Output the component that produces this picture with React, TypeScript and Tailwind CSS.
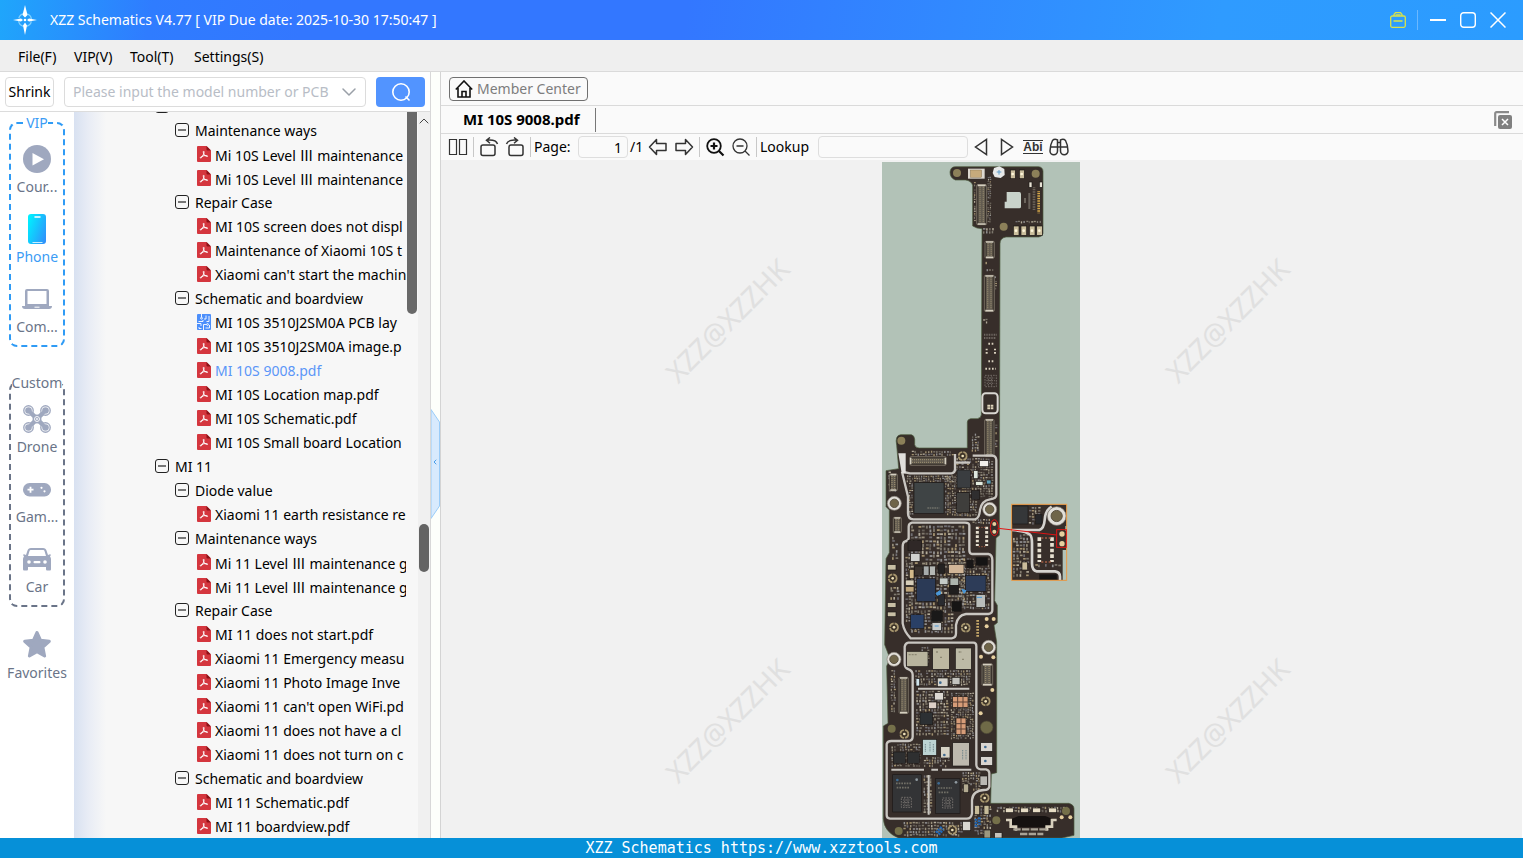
import type { ReactNode } from "react";
import { ChevronDown, ChevronLeft, ChevronUp } from "lucide-react";

type NodeKind = "group" | "folder" | "pdf" | "pcb";

const TREE: { kind: NodeKind; label: string; active?: boolean }[] = [
  { kind: "group", label: "" },
  { kind: "folder", label: "Maintenance ways" },
  { kind: "pdf", label: "Mi 10S Level Ⅲ maintenance" },
  { kind: "pdf", label: "Mi 10S Level Ⅲ maintenance" },
  { kind: "folder", label: "Repair Case" },
  { kind: "pdf", label: "MI 10S screen does not displ" },
  { kind: "pdf", label: "Maintenance of Xiaomi 10S t" },
  { kind: "pdf", label: "Xiaomi can't start the machin" },
  { kind: "folder", label: "Schematic and boardview" },
  { kind: "pcb", label: "MI 10S 3510J2SM0A PCB lay" },
  { kind: "pdf", label: "MI 10S 3510J2SM0A image.p" },
  { kind: "pdf", label: "MI 10S 9008.pdf", active: true },
  { kind: "pdf", label: "MI 10S Location map.pdf" },
  { kind: "pdf", label: "MI 10S Schematic.pdf" },
  { kind: "pdf", label: "MI 10S Small board Location" },
  { kind: "group", label: "MI 11" },
  { kind: "folder", label: "Diode value" },
  { kind: "pdf", label: "Xiaomi 11 earth resistance re" },
  { kind: "folder", label: "Maintenance ways" },
  { kind: "pdf", label: "Mi 11 Level Ⅲ maintenance g" },
  { kind: "pdf", label: "Mi 11 Level Ⅲ maintenance g" },
  { kind: "folder", label: "Repair Case" },
  { kind: "pdf", label: "MI 11 does not start.pdf" },
  { kind: "pdf", label: "Xiaomi 11 Emergency measu" },
  { kind: "pdf", label: "Xiaomi 11 Photo Image Inve" },
  { kind: "pdf", label: "Xiaomi 11 can't open WiFi.pd" },
  { kind: "pdf", label: "Xiaomi 11 does not have a cl" },
  { kind: "pdf", label: "Xiaomi 11 does not turn on c" },
  { kind: "folder", label: "Schematic and boardview" },
  { kind: "pdf", label: "MI 11 Schematic.pdf" },
  { kind: "pdf", label: "MI 11 boardview.pdf" },
];

const INDENT: Record<NodeKind, string> = {
  group: "pl-20",
  folder: "pl-[100px]",
  pdf: "pl-[122px]",
  pcb: "pl-[122px]",
};

/* ---------- tree ---------- */

function MinusBox() {
  return (
    <svg viewBox="0 0 14 14" className="h-3.5 w-3.5 shrink-0" fill="none" stroke="#222">
      <rect x="0.5" y="0.5" width="13" height="13" rx="2.5" />
      <path d="M3 7h8" strokeWidth="1.2" />
    </svg>
  );
}

function PdfIcon() {
  return (
    <svg viewBox="0 0 14 16" className="h-4 w-3.5 shrink-0">
      <path d="M1 0h8.500L14 4.500V15a1 1 0 0 1-1 1H1a1 1 0 0 1-1-1V1a1 1 0 0 1 1-1z" fill="#d4363e" />
      <path d="M9.500 0 14 4.500h-3.500a1 1 0 0 1-1-1z" fill="#8c1218" />
      <path
        d="M6.600 5.200c.9.200.3 2.200-.4 3.700S4.300 12.500 3.400 12c-.7-.6 1.200-1.700 3.300-2.200s4-.4 3.900.4c-.2.900-2.200-.1-3.200-1.400S5.900 5.300 6.600 5.200z"
        fill="none"
        stroke="#fff"
        strokeWidth="1"
      />
    </svg>
  );
}

function PcbIcon() {
  return (
    <svg viewBox="0 0 14 16" className="h-4 w-3.5 shrink-0">
      <rect width="14" height="16" rx="1" fill="#4c8ffb" />
      <g fill="none" stroke="#fff" strokeWidth="0.900">
        <path d="M4.500 0v3.200M1.500 7.500H6V6M9 1.500v3.500h-2M12 2v5.500H9.500M0 9.500h4V12M6.500 16v-5.500h3M8.500 14h4v-3M2 13v1.500h2.500" />
        <circle cx="4.500" cy="4.200" r="0.900" />
        <circle cx="10.500" cy="10.500" r="0.900" />
      </g>
    </svg>
  );
}

function TreeRow({ kind, label, active }: { kind: NodeKind; label: string; active?: boolean }) {
  const file = kind === "pdf" || kind === "pcb";
  const [before, after] = label.split("Ⅲ");
  return (
    <li className={`flex h-6 items-center whitespace-nowrap ${INDENT[kind]} ${file ? "gap-1" : "gap-1.5"}`}>
      {kind === "pdf" ? <PdfIcon /> : kind === "pcb" ? <PcbIcon /> : <MinusBox />}
      <span className={`pt-0.5 leading-5 ${active ? "text-[#5b96f7]" : "text-black"}`}>
        {before}
        {after && <span className="font-['Noto_Sans_CJK_SC',sans-serif]">Ⅲ</span>}
        {after}
      </span>
    </li>
  );
}

/* ---------- category rail ---------- */

function CourseIcon() {
  return (
    <svg viewBox="0 0 28 28" className="h-7 w-7">
      <circle cx="14" cy="14" r="14" fill="#9fa8bf" />
      <path d="M9.500 8v12.500L21 14.200z" fill="#fff" />
    </svg>
  );
}

function PhoneIcon() {
  return (
    <svg viewBox="0 0 28 30" className="h-[30px] w-7">
      <defs>
        <linearGradient id="phone" x1="0" x2="1" y1="0.2" y2="0.8">
          <stop offset="0" stopColor="#00f0ff" />
          <stop offset="1" stopColor="#2f92fb" />
        </linearGradient>
      </defs>
      <rect x="5" width="18" height="30" rx="3" fill="url(#phone)" />
      <path d="M12 3h5" stroke="#fff" strokeWidth="1.500" strokeLinecap="round" />
      <path d="M9.500 28.500h10" stroke="#c8efff" strokeWidth="1" />
    </svg>
  );
}

function ComputerIcon() {
  return (
    <svg viewBox="0 0 30 28" className="h-7 w-[30px]">
      <path d="M5 4h20a2 2 0 0 1 2 2v15H3V6a2 2 0 0 1 2-2zm.5 2v13h19V6z" fill="#9fa8bf" fillRule="evenodd" />
      <path d="M0 21h30c0 2-1 3-3 3H3c-2 0-3-1-3-3z" fill="#9fa8bf" />
      <path d="M12.500 22.200h5" stroke="#fff" />
    </svg>
  );
}

function DroneIcon() {
  return (
    <svg viewBox="0 0 28 28" className="h-7 w-7" fill="none" stroke="#9fa8bf">
      <path d="M6 6l16 16M22 6 6 22" strokeWidth="4.500" strokeLinecap="round" />
      <circle cx="14" cy="14" r="4.500" fill="#9fa8bf" stroke="none" />
      {[
        [5.5, 5.5],
        [22.5, 5.5],
        [5.5, 22.5],
        [22.5, 22.5],
      ].map(([x, y]) => (
        <g key={`${x}-${y}`}>
          <circle cx={x} cy={y} r="4.700" strokeWidth="1.400" fill="#fff" />
          <circle cx={x} cy={y} r="3.300" fill="#9fa8bf" stroke="none" />
        </g>
      ))}
      <path d="M7 7l5 5M21 7l-5 5M7 21l5-5M21 21l-5-5" strokeWidth="3.500" />
      <circle cx="14" cy="14" r="2.500" stroke="#fff" strokeWidth="0.900" />
      <circle cx="14" cy="14" r="0.900" fill="#fff" stroke="none" />
    </svg>
  );
}

function GameIcon() {
  return (
    <svg viewBox="0 0 28 28" className="h-7 w-7">
      <rect y="8" width="28" height="13.500" rx="6.500" fill="#9fa8bf" />
      <path d="M4.500 14.700h6M7.500 11.700v6" stroke="#fff" strokeWidth="1.800" />
      <circle cx="18.500" cy="12.800" r="1.100" fill="#fff" />
      <circle cx="21.500" cy="16.300" r="1.100" fill="#fff" />
    </svg>
  );
}

function CarIcon() {
  return (
    <svg viewBox="0 0 28 28" className="h-7 w-7">
      <path
        d="M8 3h12c2 0 3 1 3.500 2.500L25 10l2-.8c1 0 1 .8.600 1.300L27 11.500c.700.800 1 1.500 1 2.500v10c0 1-.5 1.500-1.500 1.500h-2c-1 0-1.500-.5-1.500-1.500v-2H5v2c0 1-.5 1.500-1.500 1.500h-2C.500 25.500 0 25 0 24V14c0-1 .3-1.700 1-2.500L.4 10.500C0 10 0 9.200 1 9.200L3 10l1.500-4.500C5 4 6 3 8 3zm0 2c-.8 0-1.200.3-1.500 1L5 11h18l-1.500-5c-.3-.7-.7-1-1.500-1z"
        fill="#9fa8bf"
        fillRule="evenodd"
      />
      <circle cx="6" cy="17" r="1.800" fill="#fff" />
      <circle cx="22" cy="17" r="1.800" fill="#fff" />
      <rect x="10.500" y="16" width="7" height="2.200" rx="1" fill="#fff" />
    </svg>
  );
}

function StarIcon() {
  return (
    <svg viewBox="0 0 28 28" className="h-7 w-7">
      <path
        d="M14 1.500 17.600 9.300 26.300 10.300 19.900 16.200 21.600 25 14 20.600 6.400 25 8.100 16.200 1.700 10.300 10.400 9.300z"
        fill="#9fa8bf"
        stroke="#9fa8bf"
        strokeWidth="3"
        strokeLinejoin="round"
      />
    </svg>
  );
}

function RailItem({ icon, label, active }: { icon: ReactNode; label: string; active?: boolean }) {
  return (
    <button type="button" className="flex flex-col items-center">
      <span className="flex h-7 items-center justify-center">{icon}</span>
      <span className={`leading-7 ${active ? "text-[#3b9cf5]" : "text-[#6a7488]"}`}>{label}</span>
    </button>
  );
}

function CategoryRail() {
  return (
    <nav className="flex w-[74px] shrink-0 flex-col items-center bg-white text-sm">
      <fieldset className="flex w-14 min-w-0 flex-col items-center gap-3.5 rounded-lg border-2 border-dashed border-[#2f9bf5] pt-[11px] pb-1">
        <legend className="mx-auto leading-[22px] text-[#3b9cf5]">VIP</legend>
        <RailItem icon={<CourseIcon />} label="Cour..." />
        <RailItem icon={<PhoneIcon />} label="Phone" active />
        <RailItem icon={<ComputerIcon />} label="Com..." />
      </fieldset>
      <fieldset className="mt-[25px] flex w-14 min-w-0 flex-col items-center gap-3.5 rounded-lg border-2 border-dashed border-[#6a7488] pt-[11px] pb-1">
        <legend className="mx-auto leading-[22px] text-[#6a7488]">Custom</legend>
        <RailItem icon={<DroneIcon />} label="Drone" />
        <RailItem icon={<GameIcon />} label="Gam..." />
        <RailItem icon={<CarIcon />} label="Car" />
      </fieldset>
      <div className="mt-6">
        <RailItem icon={<StarIcon />} label="Favorites" />
      </div>
    </nav>
  );
}

/* ---------- board photo ---------- */

// small deterministic generator so the parts stay put between renders
function parts(x: number, y: number, w: number, h: number, cell: number, seed: number) {
  const tones = ["#a9a08a", "#8d8779", "#c9c2ae", "#8a857a", "#6d675f", "#b5a37c", "#7b7a80", "#a3a4a6"];
  const out: { x: number; y: number; w: number; h: number; c: string }[] = [];
  let s = seed * 7919;
  const rnd = () => {
    s = (s * 16807) % 2147483647;
    return s / 2147483647;
  };
  for (let cy = y; cy + cell <= y + h; cy += cell) {
    for (let cx = x; cx + cell <= x + w; cx += cell) {
      if (rnd() < 0.14) continue;
      const flat = rnd() > 0.5;
      out.push({
        x: cx + rnd() * 2,
        y: cy + rnd() * 2,
        w: flat ? cell * 0.78 : cell * 0.5,
        h: flat ? cell * 0.5 : cell * 0.78,
        c: tones[Math.floor(rnd() * tones.length)],
      });
    }
  }
  return out;
}

function Parts({ area, cell = 8, seed = 7 }: { area: number[]; cell?: number; seed?: number }) {
  return (
    <g opacity="0.85">
      {parts(area[0], area[1], area[2], area[3], cell, seed).map((p, i) => (
        <rect key={i} x={p.x} y={p.y} width={p.w} height={p.h} fill={p.c} />
      ))}
    </g>
  );
}

function Chips({ items }: { items: [number, number, number, number, string][] }) {
  return (
    <>
      {items.map(([x, y, w, h, c], i) => (
        <rect key={i} x={x} y={y} width={w} height={h} fill={c} stroke="#1d1917" strokeWidth="2" />
      ))}
    </>
  );
}

function Connector({ x, y, w, h }: { x: number; y: number; w: number; h: number }) {
  const tall = h > w;
  return (
    <g>
      <rect x={x} y={y} width={w} height={h} rx="3" fill="#3a332d" stroke="#8f8878" strokeWidth="2" />
      <rect x={x + 5} y={y + 5} width={w - 10} height={h - 10} fill="#625b50" />
      {tall ? (
        <>
          <path
            d={`M${x + w / 3} ${y + 6}V${y + h - 6}M${x + (w * 2) / 3} ${y + 6}V${y + h - 6}`}
            stroke="#94886c"
            strokeWidth="4"
            strokeDasharray="3 3"
          />
          <path d={`M${x + 3} ${y + 2}h${w - 6}M${x + 3} ${y + h - 2}h${w - 6}`} stroke="#d5cfc0" strokeWidth="5" />
        </>
      ) : (
        <>
          <path
            d={`M${x + 6} ${y + h / 3}H${x + w - 6}M${x + 6} ${y + (h * 2) / 3}H${x + w - 6}`}
            stroke="#94886c"
            strokeWidth="4"
            strokeDasharray="3 3"
          />
          <path d={`M${x + 2} ${y + 3}v${h - 6}M${x + w - 2} ${y + 3}v${h - 6}`} stroke="#d5cfc0" strokeWidth="5" />
        </>
      )}
    </g>
  );
}

function Screw({ x, y, r = 21 }: { x: number; y: number; r?: number }) {
  return (
    <g>
      <circle cx={x} cy={y} r={r} fill="#e2dfd9" stroke="#8b857b" strokeWidth="2" />
      <circle cx={x} cy={y} r={r * 0.6} fill="#6f6549" stroke="#5a5242" strokeWidth="3" />
    </g>
  );
}

function Contact({ x, y }: { x: number; y: number }) {
  return (
    <g>
      <circle cx={x} cy={y} r="12" fill="#3d3328" stroke="#a8976f" strokeWidth="5" strokeDasharray="16 3" />
      <circle cx={x} cy={y} r="4" fill="#efe2ba" />
    </g>
  );
}

function Pads({ at, r = 6, fill = "#e6cf9f" }: { at: number[][]; r?: number; fill?: string }) {
  return (
    <>
      {at.map(([x, y]) => (
        <circle key={`${x}-${y}`} cx={x} cy={y} r={r} fill={fill} />
      ))}
    </>
  );
}

function QrMark({ x, y, size }: { x: number; y: number; size: number }) {
  return (
    <g fill="none" stroke="#8f8a84" strokeWidth="2">
      <rect x={x} y={y} width={size} height={size} strokeDasharray="5 3" />
      <path d={`M${x + 5} ${y + 8}h${size - 10}M${x + 4} ${y + 16}h${size - 8}M${x + 5} ${y + 24}h${size - 10}`} strokeDasharray="4 3 7 2" />
      <path d={`M${x + 10} ${y + 3}v${size - 6}M${x + 20} ${y + 3}v${size - 6}`} strokeDasharray="3 4 6 3" />
    </g>
  );
}

function BoardPhoto() {
  return (
    <svg viewBox="0 0 594 2028" className="h-[676px] w-[198px] shrink-0 bg-[#b2c2b7]" role="img" aria-label="MI 10S main board">
      <path
        d="M204 30Q206 14 220 14H470Q483 16 483 28V214Q482 224 470 225H372Q354 228 354 245L352 1120L342 1128L338 1316L346 1330L346 1382L336 1390L344 1440L344 1832L328 1836L326 1924H560Q576 1928 576 1940V2020L540 2028H50Q6 2010 4 1970V1692L18 1684L14 1512L24 1490L8 1448L12 1190L22 1172V1044L12 1034V926L50 920L44 850Q38 820 56 818H88Q97 820 98 832V848Q100 858 112 858H256V780Q256 772 266 770H286Q297 768 298 758L300 200Q284 200 272 192V70Q268 56 250 54H220Q204 48 204 30Z"
        fill="#372e2a"
        stroke="#4c5a3c"
        strokeWidth="2"
      />

      {/* camera arm */}
      <g transform="translate(-6 -6)">
        <path d="M380 96h38q5 0 5 6v38q0 5-5 5h-44v-20h6z" fill="#c9d3cb" />
        <Pads at={[[231, 39], [467, 41], [371, 200]]} r={12} fill="#8c8059" />
        <rect x="264" y="26" width="50" height="30" fill="#ddd9d1" />
        <rect x="271" y="30" width="34" height="22" fill="#c6aa7c" stroke="#6f5b3d" />
        <path d="M342 24l16-5 15 8 1 18-12 9-18-3-6-12z" fill="#e7e8e8" />
        <path d="M350 36h14M357 30v14" stroke="#5e9dcb" strokeWidth="3" />
        <Connector x={290} y={74} w={30} h={120} />
        <Parts area={[322, 50, 12, 140]} cell={6} seed={12} />
        <Parts area={[281, 66, 8, 120]} cell={7} seed={21} />
        <path d="M462 82v70" stroke="#6d645a" strokeWidth="8" strokeDasharray="3 2" />
        <path d="M476 94v66" stroke="#d8a94a" strokeWidth="8" strokeDasharray="3 2" />
        <path d="M435 115v14M448 100v46" stroke="#7c756c" strokeWidth="6" strokeDasharray="4 2" />
        <Chips
          items={[
            [391, 30, 15, 26, "#c9bd9e"],
            [418, 30, 15, 26, "#c9bd9e"],
            [400, 198, 17, 28, "#cbbf9d"],
            [423, 198, 17, 28, "#cbbf9d"],
            [448, 198, 17, 28, "#cbbf9d"],
            [470, 198, 17, 28, "#cbbf9d"],
            [447, 66, 9, 16, "#e7e2d4"],
            [478, 66, 9, 16, "#e7e2d4"],
          ]}
        />
        <Pads at={[[398, 42], [425, 42], [408, 212], [431, 212], [456, 212], [478, 212]]} r={4} fill="#fff7dc" />
        <Parts area={[405, 182, 80, 12]} cell={8} seed={9} />
        <Parts area={[308, 204, 36, 20]} cell={9} seed={4} />
        <Connector x={315} y={244} w={28} h={50} />
        <Parts area={[316, 304, 20, 12]} cell={9} seed={16} />
        <Parts area={[310, 326, 36, 10]} cell={8} seed={18} />
        <Connector x={313} y={346} w={30} h={108} />
        <Parts area={[344, 340, 9, 50]} cell={7} seed={2} />
        <Parts area={[308, 468, 20, 26]} cell={8} seed={17} />
        <path d="M312 524h40M312 534h36" stroke="#6e6761" strokeWidth="6" strokeDasharray="3 2" />
        <path d="M320 566v20M345 566v20M325 551h18M325 604h18M316 626h32" stroke="#d8d0bd" strokeWidth="6" strokeDasharray="5 5" />
        <QrMark x={315} y={646} size={34} />
        <rect x="307" y="700" width="46" height="60" rx="10" fill="none" stroke="#d9d7d2" strokeWidth="6" />
        <path d="M322 734h8v6h-8zM332 734h8v6h-8zM322 742h8v6h-8zM332 742h8v6h-8z" fill="#e0d5bb" />
        <Connector x={314} y={778} w={28} h={110} />
        <Parts area={[275, 820, 28, 60]} cell={8} seed={33} />
        <Parts area={[345, 776, 9, 90]} cell={8} seed={34} />
        <Pads at={[[64, 842]]} r={12} fill="#8c8059" />
      </g>

      {/* processor and power section */}
      <g transform="translate(-6 804)">
        <Parts area={[95, 62, 130, 18]} cell={8} seed={41} />
        <Parts area={[80, 136, 140, 22]} cell={7} seed={42} />
        <Parts area={[86, 158, 14, 100]} cell={7} seed={43} />
        <Parts area={[194, 138, 36, 124]} cell={7} seed={44} />
        <Parts area={[228, 84, 118, 120]} cell={8} seed={45} />
        <Parts area={[228, 204, 68, 58]} cell={8} seed={55} />
        <Parts area={[25, 124, 34, 70]} cell={9} seed={46} />
        <Parts area={[36, 320, 24, 70]} cell={10} seed={47} />
        <Parts area={[30, 470, 30, 40]} cell={10} seed={56} />
        <Parts area={[92, 286, 172, 254]} cell={11} seed={48} />
        <Parts area={[76, 370, 24, 210]} cell={9} seed={49} />
        <Parts area={[232, 385, 102, 160]} cell={9} seed={50} />
        <Parts area={[92, 540, 130, 76]} cell={10} seed={51} />
        <Parts area={[276, 266, 60, 16]} cell={8} seed={52} />
        <g fill="none" stroke="#c9c6c1" strokeWidth="7" strokeLinejoin="round">
          <path d="M66 125L84 200V250Q84 268 100 268H285Q298 266 300 240Q304 212 330 208Q349 206 349 195V90Q348 77 335 77H278M70 126L90 130H215Q225 128 225 118V72M225 98H270" />
          <path d="M86 290V325Q84 332 74 335Q68 338 68 350V580Q72 604 92 625H215Q228 624 228 610V585Q232 556 258 552H325Q337 550 337 540V390Q337 374 325 372H275Q268 370 268 360V286Q268 278 255 278H96Q86 280 86 290Z" />
        </g>
        <path d="M55 70h22v60l-12 0z" fill="#e1dfdc" />
        <Connector x={90} y={80} w={108} h={26} />
        <Connector x={28} y={132} w={24} h={50} />
        <Connector x={40} y={262} w={24} h={46} />
        <Chips
          items={[
            [102, 158, 90, 92, "#3f4445"],
            [231, 120, 40, 54, "#3a3d40"],
            [230, 188, 38, 60, "#3f3e3c"],
            [275, 182, 24, 26, "#2f2e2f"],
            [298, 92, 28, 18, "#f1efea"],
            [281, 122, 13, 24, "#dfe8df"],
            [287, 154, 22, 12, "#e5ece0"],
            [320, 150, 13, 12, "#5f9fb6"],
            [84, 332, 40, 30, "#2f2827"],
            [92, 370, 28, 24, "#cfd0ce"],
            [206, 403, 46, 28, "#d1b698"],
            [130, 408, 17, 28, "#a7abaa"],
            [149, 408, 17, 28, "#b5b8b5"],
            [174, 402, 20, 28, "#242222"],
            [104, 408, 24, 28, "#3a332f"],
            [76, 450, 26, 16, "#d6cdb8"],
            [76, 470, 26, 16, "#bfa67c"],
            [88, 418, 14, 28, "#d2b98a"],
            [110, 446, 56, 68, "#2b3a56"],
            [178, 444, 26, 20, "#c5cbc8"],
            [210, 444, 26, 22, "#aeb5ae"],
            [256, 436, 62, 48, "#2d3c58"],
            [208, 466, 28, 26, "#201e1e"],
            [288, 382, 34, 24, "#151414"],
            [260, 390, 20, 24, "#191717"],
            [288, 494, 28, 38, "#b9bdba"],
            [216, 514, 28, 30, "#161515"],
            [154, 542, 34, 32, "#1a1919"],
            [156, 578, 28, 24, "#c9cbc9"],
            [92, 554, 40, 42, "#2a4066"],
            [174, 494, 20, 32, "#2a2b30"],
          ]}
        />
        <path d="M168 490l12-8 2 10-10 4zM246 478l12 4-6 8zM290 502h16M164 588h12" stroke="#4a98d8" strokeWidth="3" fill="#4a98d8" />
        <path d="M142 234h36" stroke="#6f6f68" strokeWidth="4" strokeDasharray="5 2" />
        <path d="M292 290v58M320 290v58" stroke="#e6e0d0" strokeWidth="9" strokeDasharray="8 5" />
        <path d="M296 292h22M296 350h22" stroke="#a35c43" strokeWidth="3" strokeDasharray="4 4" />
        <Screw x={43} y={220} />
        <Screw x={329} y={238} />
        <Chips items={[[22, 404, 26, 16, "#c8bfa5"], [22, 518, 26, 14, "#c8bfa5"], [22, 546, 26, 14, "#c8bfa5"]]} />
        <Contact x={248} y={78} />
        <Contact x={38} y={445} />
        <Contact x={42} y={592} />
        <Contact x={257} y={593} />
        <Pads at={[[320, 567], [341, 567], [320, 589], [343, 282], [343, 305]]} />
        <path d="M293 570v50" stroke="#c6a869" strokeWidth="8" strokeDasharray="5 4" />
      </g>

      {/* radio and memory section */}
      <g transform="translate(-6 1434)">
        <Parts area={[32, 90, 20, 130]} cell={8} seed={61} />
        <Parts area={[105, 90, 175, 50]} cell={8} seed={62} />
        <Parts area={[108, 152, 100, 140]} cell={9} seed={63} />
        <Parts area={[212, 158, 70, 140]} cell={7} seed={64} />
        <Parts area={[34, 310, 90, 72]} cell={8} seed={65} />
        <Parts area={[130, 350, 86, 36]} cell={8} seed={66} />
        <Parts area={[246, 396, 56, 56]} cell={8} seed={67} />
        <Parts area={[70, 545, 180, 48]} cell={9} seed={68} />
        <Parts area={[282, 496, 60, 94]} cell={9} seed={69} />
        <Parts area={[130, 405, 32, 120]} cell={9} seed={70} />
        <Parts area={[124, 20, 24, 60]} cell={8} seed={71} />
        <Parts area={[350, 500, 220, 24]} cell={9} seed={72} />
        <g fill="none" stroke="#c9c6c1" strokeWidth="7" strokeLinejoin="round">
          <path d="M85 8H280Q289 8 289 18V375Q290 386 302 388H318Q328 390 328 400V440Q326 450 312 450Q278 452 276 480V520Q274 536 260 536H30Q20 535 20 525V312Q22 303 34 303H84Q98 302 98 290V105Q98 92 86 88Q74 84 74 72V20Q76 9 85 8Z" />
          <path d="M114 146H268M34 389H132M154 389H174M186 389H274M146 405V524" strokeWidth="6" />
        </g>
        <Connector x={57} y={112} w={28} h={108} />
        <Connector x={306} y={72} w={32} h={64} />
        <Chips
          items={[
            [80, 34, 64, 46, "#b8b49e"],
            [158, 24, 50, 64, "#bdb8a1"],
            [226, 24, 48, 64, "#bdbaa6"],
            [172, 114, 32, 26, "#d5d2ca"],
            [216, 112, 24, 22, "#c3c3be"],
            [108, 116, 11, 22, "#cfe3ea"],
            [164, 158, 26, 22, "#dcd8d2"],
            [146, 186, 24, 20, "#dcd0c8"],
            [120, 218, 38, 36, "#2c3033"],
            [218, 170, 46, 32, "#d69c78"],
            [228, 234, 30, 50, "#d69c78"],
            [128, 298, 42, 48, "#bcd3d3"],
            [182, 320, 28, 34, "#d6d3c6"],
            [218, 308, 50, 70, "#bdb9ae"],
            [40, 336, 36, 34, "#2e2f30"],
            [82, 336, 36, 34, "#2e2f30"],
            [38, 404, 86, 112, "#333436"],
            [166, 416, 74, 104, "#333436"],
            [302, 308, 36, 26, "#d9d5d0"],
            [302, 350, 36, 26, "#d9d5d0"],
            [300, 408, 22, 28, "#bab8b3"],
            [248, 544, 24, 28, "#d8d7d1"],
            [250, 432, 16, 26, "#b4ab91"],
            [284, 496, 15, 28, "#c6bb99"],
            [312, 496, 15, 28, "#c6bb99"],
          ]}
        />
        <path d="M233 170v32M249 170v32M218 186h46M243 234v50M228 251h30M228 267h30" stroke="#5a4034" strokeWidth="3" />
        <path d="M48 430h46M50 443h40M174 444h42M176 457h32" stroke="#716f66" strokeWidth="5" strokeDasharray="5 3" />
        <path d="M86 44h26M168 36h8M180 52h6M236 36h10M246 58h8" stroke="#8d8874" strokeWidth="4" strokeDasharray="6 3" />
        <QrMark x={64} y={472} size={30} />
        <QrMark x={188} y={474} size={30} />
        <path d="M136 312v24M150 306v28M160 312v24M248 330v30M258 330v30" stroke="#6d8388" strokeWidth="3" strokeDasharray="3 2" />
        <Pads at={[[52, 420], [176, 430], [181, 128], [316, 321], [316, 363], [193, 345]]} r={4} fill="#3f6b92" />
        <Pads at={[[110, 419], [228, 427]]} r={4} fill="#8f9aa0" />
        <Screw x={42} y={58} />
        <Screw x={326} y={22} />
        <Pads at={[[303, 50], [337, 150], [302, 220], [340, 52], [545, 532], [571, 532]]} />
        <Pads at={[[35, 266], [56, 573], [558, 513], [349, 541]]} r={12} fill="#75704a" />
        <circle cx="320" cy="262" r="19" fill="#6f6a47" stroke="#4a4634" strokeWidth="2" />
        <Contact x={73} y={282} />
        <Contact x={314} y={474} />
        <Contact x={217} y={570} />
        <Contact x={317} y={184} />
        <path d="M168 578l18-18M176 584l14-16M288 536v26M298 532v22" stroke="#1f66b5" strokeWidth="8" strokeDasharray="6 3" />
        {/* usb port */}
        <path d="M396 536l20-8h80l20 8v26H396z" fill="#151110" />
        <path d="M378 540h14v20h16v12M530 540h-14v20h-16v12" fill="none" stroke="#d8d0bd" strokeWidth="8" />
        <path d="M400 568h106M420 582h70" stroke="#a9a396" strokeWidth="7" strokeDasharray="22 4" />
        <Chips
          items={[
            [376, 504, 24, 14, "#e6dcc4"],
            [422, 504, 24, 14, "#e6dcc4"],
            [458, 504, 24, 14, "#e6dcc4"],
            [506, 504, 24, 14, "#e6dcc4"],
            [312, 570, 20, 24, "#9c987f"],
            [344, 578, 22, 16, "#c7c3bb"],
          ]}
        />
      </g>

      {/* enlarged inset with the test points */}
      <g transform="translate(-6 804)">
        <rect x="395" y="223" width="165" height="228" fill="#372e2a" />
        <path d="M548 360h12v90h-12zM556 288h4v14h-4z" fill="#b2c2b7" />
        <Parts area={[446, 230, 44, 56]} cell={9} seed={81} />
        <Parts area={[398, 312, 50, 134]} cell={10} seed={82} />
        <Parts area={[464, 402, 80, 14]} cell={10} seed={83} />
        <Chips
          items={[
            [398, 228, 46, 54, "#353739"],
            [466, 254, 20, 28, "#27272a"],
            [426, 396, 16, 24, "#cabd9c"],
            [478, 434, 52, 14, "#151414"],
          ]}
        />
        <path
          d="M396 300H478Q492 296 494 270Q496 240 515 230M396 300Q440 304 450 314Q456 320 456 340V400Q456 422 470 424H525Q540 426 540 440V450"
          fill="none"
          stroke="#d5d3cf"
          strokeWidth="8"
        />
        <Screw x={530} y={258} r={28} />
        <path d="M478 322v74M516 322v74" stroke="#e6e0d0" strokeWidth="11" strokeDasharray="11 6" />
        <path d="M484 324h28M484 396h28" stroke="#a35c43" strokeWidth="4" strokeDasharray="6 5" />
        <Pads at={[[546, 312], [546, 341]]} r={8} />
        <rect x="395" y="223" width="165" height="228" fill="none" stroke="#f0a04b" strokeWidth="3" />
        <g fill="none" stroke="#e01414" strokeWidth="3">
          <ellipse cx="343" cy="293" rx="12" ry="24" />
          <path d="M355 295L530 315" />
          <rect x="530" y="299" width="29" height="53" />
        </g>
      </g>
    </svg>
  );
}

/* ---------- toolbar ---------- */

function ToolIcon({ children }: { children: ReactNode }) {
  return (
    <svg viewBox="0 0 20 20" className="h-5 w-5" fill="none" stroke="#333" strokeWidth="1.500">
      {children}
    </svg>
  );
}

function ToolButton({ label, wide, children }: { label: string; wide?: boolean; children: ReactNode }) {
  return (
    <button
      type="button"
      aria-label={label}
      className={`flex h-5 shrink-0 items-center justify-center ${wide ? "w-[26px]" : "w-5"}`}
    >
      {children}
    </button>
  );
}

function Divider() {
  return <span className="ml-[5px] h-5 w-px shrink-0 bg-[#c8c8c8]" />;
}

function Toolbar() {
  return (
    <div className="flex h-[26px] shrink-0 items-center bg-[#fafafa] pl-[7px]">
      <ToolButton label="Two pages">
        <ToolIcon>
          <path d="M1.500 2.500h7v15h-7zM11.500 2.500h7v15h-7z" strokeWidth="1.200" />
        </ToolIcon>
      </ToolButton>
      <Divider />
      <span className="ml-[5px] flex gap-1.5">
        <ToolButton label="Rotate left">
          <ToolIcon>
            <rect x="2" y="8" width="14" height="10.500" rx="2" />
            <path d="M18.500 7C17.500 4 14 2.600 8 3.200M11 0.500 7.500 3.200l3.500 3" />
          </ToolIcon>
        </ToolButton>
        <ToolButton label="Rotate right">
          <ToolIcon>
            <rect x="4" y="8" width="14" height="10.500" rx="2" />
            <path d="M1.500 7C2.500 4 6 2.600 12 3.200M9 0.500l3.500 2.700-3.500 3" />
          </ToolIcon>
        </ToolButton>
      </span>
      <Divider />
      <label htmlFor="page" className="ml-[3px] w-11 shrink-0">
        Page:
      </label>
      <input
        id="page"
        defaultValue="1"
        className="h-[22px] w-[50px] shrink-0 rounded-sm border border-[#dedede] px-[5px] text-right"
      />
      <span className="w-5 shrink-0 pl-0.5">/1</span>
      <span className="flex gap-1.5">
        <ToolButton label="Previous page">
          <ToolIcon>
            <path d="M1.500 10 8.500 2.500v4H18v7H8.500v4z" strokeLinejoin="round" />
          </ToolIcon>
        </ToolButton>
        <ToolButton label="Next page">
          <ToolIcon>
            <path d="M18.500 10 11.500 2.500v4H2v7h9.500v4z" strokeLinejoin="round" />
          </ToolIcon>
        </ToolButton>
      </span>
      <Divider />
      <span className="ml-[5px] flex gap-1.5">
        <ToolButton label="Zoom in">
          <ToolIcon>
            <g stroke="#111" strokeWidth="1.800">
              <circle cx="9" cy="9" r="6.800" />
              <path d="M9 5.500v7M5.500 9h7M14 14l4.500 4.500" strokeWidth="2.200" />
            </g>
          </ToolIcon>
        </ToolButton>
        <ToolButton label="Zoom out">
          <ToolIcon>
            <circle cx="9" cy="9" r="7" strokeWidth="1.300" />
            <path d="M5.500 9h7M14 14l4.500 4.500" strokeWidth="1.300" />
          </ToolIcon>
        </ToolButton>
      </span>
      <Divider />
      <label htmlFor="lookup" className="ml-[3px] w-[58px] shrink-0">
        Lookup
      </label>
      <input id="lookup" className="h-[22px] w-[150px] rounded-sm border border-[#dedede] px-[5px]" />
      <ToolButton label="Find previous" wide>
        <ToolIcon>
          <path d="M15.500 2.500v15L4.500 10z" />
        </ToolIcon>
      </ToolButton>
      <ToolButton label="Find next" wide>
        <ToolIcon>
          <path d="M4.500 2.500v15L15.500 10z" />
        </ToolIcon>
      </ToolButton>
      <ToolButton label="Match case" wide>
        <span className="border-y border-[#333] font-['Liberation_Sans'] text-xs leading-3 font-bold text-[#333]">Abi</span>
      </ToolButton>
      <ToolButton label="Find all" wide>
        <ToolIcon>
          <path d="M3.500 3.500Q5.500 1.500 8.500 3V14a3.700 3.700 0 0 1-7.500 0Q1 8 3.500 3.500zM16.500 3.500q-2-2-5-.5V14a3.700 3.700 0 0 0 7.500 0Q19 8 16.500 3.500zM8.500 5.500h3M8.500 10h3M1.500 10h7M11.500 10h7" />
        </ToolIcon>
      </ToolButton>
    </div>
  );
}

/* ---------- window ---------- */

function TitleBar() {
  return (
    <header className="flex h-10 shrink-0 items-center bg-[linear-gradient(100deg,#1fa6fb_0%,#2f7cff_10%,#3377ff_20%,#3377ff_45%,#2f9bff_80%,#2b9cff_100%)] pr-2.5 pl-3 text-white">
      <svg viewBox="0 0 26 30" className="h-[30px] w-[26px] shrink-0" fill="none">
        <circle cx="13" cy="15" r="6.500" stroke="#7fd0ff" strokeWidth="1.300" strokeDasharray="7 3.200" strokeDashoffset="-1.500" />
        <path d="M13 0l2.500 10L13 12.500 10.500 10zM13 30l-2-9.500 2-3 2 3zM1 15l8-1.500 2 1.500-2 1.500zM25 15l-8-1.500-2 1.500 2 1.500z" fill="#fff" />
        <circle cx="13" cy="15" r="1.300" fill="#fff" />
      </svg>
      <h1 className="ml-3 flex-1 whitespace-nowrap">XZZ Schematics V4.77 [ VIP Due date: 2025-10-30 17:50:47 ]</h1>
      <button type="button" aria-label="Toolbox" className="flex w-[30px] justify-center">
        <svg viewBox="0 0 16 16" className="h-4 w-4" fill="none" stroke="#d9e34a" strokeWidth="1.300">
          <rect x="0.700" y="4" width="14.600" height="11.300" rx="1.500" />
          <path d="M4 4V2.500L5.500 0.700h5L12 2.500V4M3.500 9h9M5.500 2.800h5" />
        </svg>
      </button>
      <span className="mr-[5px] ml-1 h-5 w-px bg-[#6bb8ff]" />
      <button type="button" aria-label="Minimize" className="flex w-[30px] justify-center">
        <svg viewBox="0 0 16 16" className="h-4 w-4" stroke="#fff" strokeWidth="2">
          <path d="M0 8h16" />
        </svg>
      </button>
      <button type="button" aria-label="Maximize" className="flex w-[30px] justify-center">
        <svg viewBox="0 0 16 16" className="h-4 w-4" fill="none" stroke="#fff" strokeWidth="1.400">
          <rect x="0.700" y="0.700" width="14.600" height="14.600" rx="3" />
        </svg>
      </button>
      <button type="button" aria-label="Close" className="flex w-[30px] justify-center">
        <svg viewBox="0 0 16 16" className="h-4 w-4" stroke="#fff" strokeWidth="1.500">
          <path d="M0.500 0.500l15 15M15.500 0.500l-15 15" />
        </svg>
      </button>
    </header>
  );
}

function LeftPane() {
  return (
    <aside className="flex w-[431px] shrink-0 flex-col border-r border-[#d8d8d8] bg-white">
      <div className="flex h-10 shrink-0 items-center gap-2.5 border-b border-[#dcdcdc] px-[5px]">
        <button type="button" className="h-[30px] w-[49px] shrink-0 rounded border border-[#dcdcdc] text-center">
          Shrink
        </button>
        <div className="flex h-[30px] min-w-0 flex-1 items-center rounded border border-[#dcdcdc] pr-1 pl-2">
          <input
            aria-label="Model number"
            placeholder="Please input the model number or PCB"
            className="min-w-0 flex-1 outline-none placeholder:text-[#b8bdc6]"
          />
          <button type="button" aria-label="Show history" className="shrink-0">
            <ChevronDown className="h-6 w-6 text-[#9aa0a8]" strokeWidth={1.5} />
          </button>
        </div>
        <button
          type="button"
          aria-label="Search"
          className="flex h-[30px] w-[49px] shrink-0 items-center justify-center rounded-sm bg-[#5294ff]"
        >
          <svg viewBox="0 0 20 20" className="h-5 w-5" fill="none" stroke="#fff" strokeWidth="1.600">
            <circle cx="10" cy="10" r="8.200" />
            <path d="M14.500 14.500 18.500 18.500" />
          </svg>
        </button>
      </div>
      <div className="flex min-h-0 flex-1">
        <CategoryRail />
        <div className="min-w-0 flex-1 overflow-hidden bg-[#f7f7f7] bg-[linear-gradient(90deg,#d8e1f1_0px,#e8ecf5_14px,#f7f7f7_32px)] pl-px">
          <ul className="-mt-[18px] overflow-hidden">
            {TREE.map((node, i) => (
              <TreeRow key={i} {...node} />
            ))}
          </ul>
        </div>
        <div className="w-3 shrink-0 bg-[#f7f7f7]">
          <div className="ml-px h-[202px] w-2.5 rounded-b-full bg-[#696969]" />
        </div>
        <div className="flex w-3 shrink-0 flex-col items-center bg-[#f0f0f0]">
          <ChevronUp className="mt-px h-4 w-4 shrink-0 text-[#444]" strokeWidth={1.5} />
          <div className="mt-[395px] h-12 w-2.5 shrink-0 rounded-full bg-[#636363]" />
        </div>
      </div>
    </aside>
  );
}

function Splitter() {
  return (
    <div className="w-[9px] shrink-0 bg-[#fdfffb]">
      <button type="button" aria-label="Collapse panel" className="relative mt-[337px] block h-[110px] w-[9px]">
        <svg viewBox="0 0 9 110" className="h-[110px] w-[9px]">
          <path d="M0 0.500 8.500 13v84L0 109.500z" fill="#d8eafd" stroke="#9accf8" />
        </svg>
        <ChevronLeft className="absolute top-[49px] left-0 h-2 w-2 text-[#4a9eea]" strokeWidth={3} />
      </button>
    </div>
  );
}

function Viewer() {
  return (
    <div className="relative flex min-h-0 flex-1 justify-center overflow-hidden border-r border-white bg-[#f1f1f1] pt-0.5 pr-0.5">
      <BoardPhoto />
      <div className="pointer-events-none absolute inset-0 overflow-hidden">
        <div className="-mt-10 ml-9 grid auto-rows-[400px] grid-cols-[500px_500px] place-items-center">
          {[0, 1, 2, 3].map((i) => (
            <span key={i} className="-rotate-45 text-[28px] text-[#e0e0e0]">
              XZZ@XZZHK
            </span>
          ))}
        </div>
      </div>
    </div>
  );
}

export default function App() {
  return (
    <div className="flex h-screen flex-col overflow-hidden bg-white font-['Noto_Sans','Noto_Sans_CJK_SC',sans-serif] text-sm text-black">
      <TitleBar />
      <nav className="flex h-8 shrink-0 items-center border-b border-[#dadada] bg-[#efefef] pt-0.5 pl-[18px] text-left">
        <button type="button" className="w-14 text-left">
          File(F)
        </button>
        <button type="button" className="w-14 text-left">
          VIP(V)
        </button>
        <button type="button" className="w-16 text-left">
          Tool(T)
        </button>
        <button type="button">Settings(S)</button>
      </nav>

      <div className="flex min-h-0 flex-1">
        <LeftPane />
        <Splitter />
        <main className="flex min-w-0 flex-1 flex-col border-l border-[#d4d4d4]">
          <div className="flex h-[34px] shrink-0 items-center border-b border-[#dadada] bg-[#fafafa] pl-2">
            <button
              type="button"
              className="flex h-6 w-[139px] items-center gap-1 rounded border border-[#707070] pl-[5px] text-[#7d7d7d]"
            >
              <svg viewBox="0 0 18 18" className="h-[18px] w-[18px]" fill="none" stroke="#111" strokeWidth="1.600">
                <path d="M0.800 9.500 9 1l8.200 8.500M3 8v9h12V8M7 17v-5.500h4V17" />
              </svg>
              Member Center
            </button>
          </div>
          <div className="flex h-7 shrink-0 items-center border-b border-[#dadada] bg-[#fafafa] pr-[11px]">
            <button
              type="button"
              className="h-6 w-[155px] border-r border-[#777] pl-[22px] text-left text-[15px] font-bold whitespace-nowrap"
            >
              MI 10S 9008.pdf
            </button>
            <button type="button" aria-label="Close all tabs" className="ml-auto">
              <svg viewBox="0 0 18 18" className="h-[18px] w-[18px]">
                <path d="M1.200 15V2.500a1.300 1.300 0 0 1 1.300-1.300H15" fill="none" stroke="#8a8a8a" strokeWidth="2.200" />
                <rect x="4" y="4" width="14" height="14" rx="2" fill="#808080" />
                <path d="M8 8l6 6M14 8l-6 6" stroke="#fff" strokeWidth="1.500" />
              </svg>
            </button>
          </div>
          <Toolbar />
          <Viewer />
        </main>
      </div>

      <footer className="h-5 shrink-0 bg-[#0690d8] text-center font-['DejaVu_Sans_Mono',monospace] text-[15px] leading-5 text-white">
        XZZ Schematics https://www.xzztools.com
      </footer>
    </div>
  );
}
